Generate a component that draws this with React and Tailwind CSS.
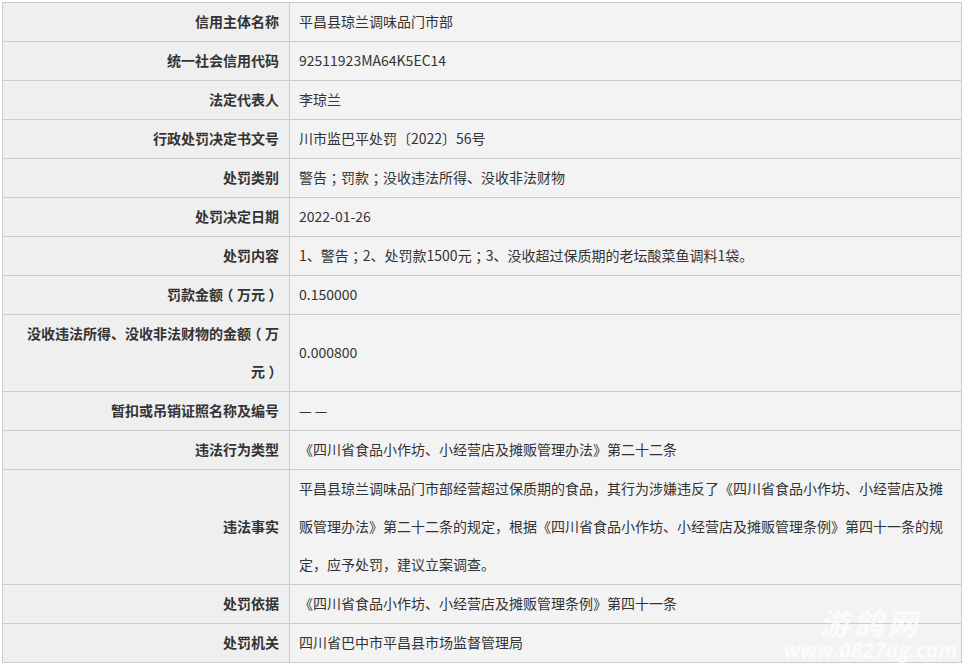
const ROWS = [
  ['信用主体名称', '平昌县琼兰调味品门市部'],
  ['统一社会信用代码', '92511923MA64K5EC14'],
  ['法定代表人', '李琼兰'],
  ['行政处罚决定书文号', '川市监巴平处罚〔2022〕56号'],
  ['处罚类别', '警告；罚款；没收违法所得、没收非法财物'],
  ['处罚决定日期', '2022-01-26'],
  ['处罚内容', '1、警告；2、处罚款1500元；3、没收超过保质期的老坛酸菜鱼调料1袋。'],
  ['罚款金额（万元）', '0.150000'],
  ['没收违法所得、没收非法财物的金额（万元）', '0.000800'],
  ['暂扣或吊销证照名称及编号', '— —'],
  ['违法行为类型', '《四川省食品小作坊、小经营店及摊贩管理办法》第二十二条'],
  ['违法事实', '平昌县琼兰调味品门市部经营超过保质期的食品，其行为涉嫌违反了《四川省食品小作坊、小经营店及摊贩管理办法》第二十二条的规定，根据《四川省食品小作坊、小经营店及摊贩管理条例》第四十一条的规定，应予处罚，建议立案调查。'],
  ['处罚依据', '《四川省食品小作坊、小经营店及摊贩管理条例》第四十一条'],
  ['处罚机关', '四川省巴中市平昌县市场监督管理局'],
]

// the reference font centres these marks in their em box
const withPunct = (text) =>
  text.split(/([；（）])/).map((part, i) =>
    i % 2 ? (
      <span key={i} className="inline-block w-[14px] text-center [font-feature-settings:'halt']">{part}</span>
    ) : (
      part
    )
  )

export default function App() {
  return (
    <div className="relative w-[964px] h-[664px] overflow-hidden bg-white pt-[2px] pl-[2px] font-['Tahoma','Noto_Sans_CJK_SC',sans-serif] text-[14px] leading-[38px] text-[#333]">
      <table className="w-[960px] table-fixed border-collapse">
        <colgroup>
          <col className="w-[287px]" />
          <col />
        </colgroup>
        <tbody>
          {ROWS.map(([label, value]) => (
            <tr key={label}>
              <th className="border border-[#ccc] bg-[#efefef] pl-[14px] pr-[10px] text-right font-bold text-[#333]">
                <div className="-translate-y-[1.5px]">{withPunct(label)}</div>
              </th>
              <td className="border border-[#ccc] bg-[#f3f3f3] pl-[9px] pr-[11px] text-left">
                <div className="-translate-y-[1.5px]">{withPunct(value)}</div>
              </td>
            </tr>
          ))}
        </tbody>
      </table>
      <div className="absolute right-[7px] bottom-[2px] flex flex-col items-center text-white/70 italic font-bold font-['Noto_Sans_CJK_SC',sans-serif]">
        <span className="text-[30px] leading-[32px] tracking-[4px]">游鸽网</span>
        <span className="text-[21px] leading-[24px] font-['Open_Sans',sans-serif]">www.0827ug.com</span>
      </div>
    </div>
  )
}
